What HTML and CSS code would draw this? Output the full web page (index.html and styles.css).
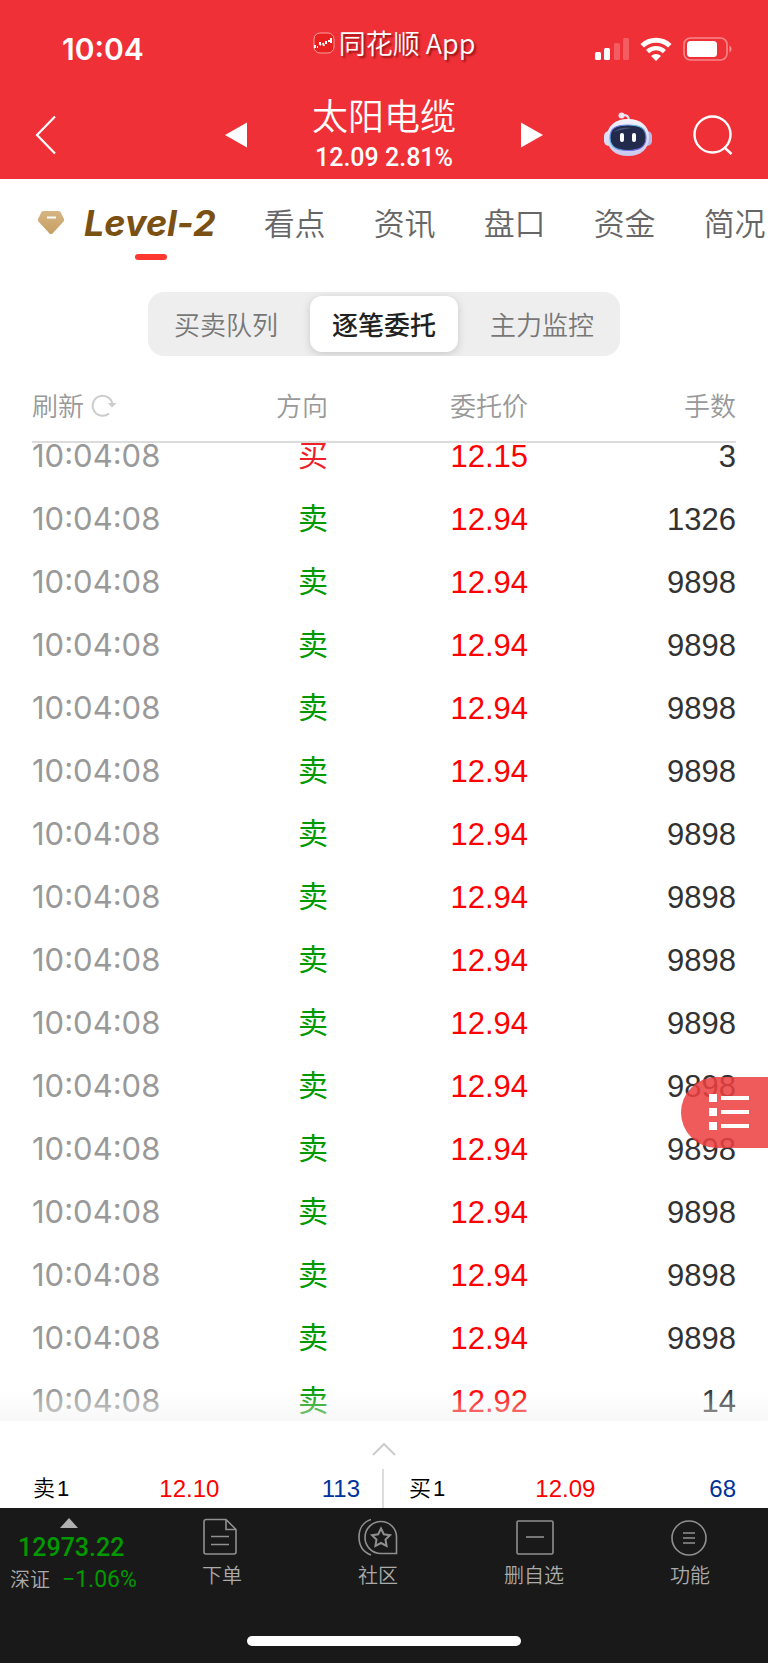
FILE: index.html
```html
<!DOCTYPE html>
<html lang="zh-CN">
<head>
    <meta charset="UTF-8">
    <meta name="viewport" content="width=device-width, initial-scale=1.0">
    <title>太阳电缆 Level-2</title>
    <link rel="stylesheet" href="styles.css">
</head>
<body>
    <header class="header">
        <div class="status-bar">
            <span class="clock">10:04</span>
            <div class="app-name">
                <svg width="22" height="22" viewBox="0 0 22 22">
                    <rect x="1" y="1" width="20" height="20" rx="6" fill="#e8201f" stroke="#f8a0a0"/>
                    <path d="M2 13v3M4 15h1M7 10v2l1 1M10 11l1 3M13 9v3M16 8v2M18 6v5" stroke="#fff" stroke-width="2" fill="none"/>
                </svg>
                <span>同花顺 App</span>
            </div>
            <div class="status-icons">
                <svg width="34" height="22" viewBox="0 0 34 22" fill="#fff">
                    <rect x="0" y="14" width="6" height="8" rx="1.5"/>
                    <rect x="9" y="10" width="6" height="12" rx="1.5"/>
                    <rect x="19" y="5" width="6" height="17" rx="1.5" opacity=".22"/>
                    <rect x="28" y="0" width="6" height="22" rx="1.5" opacity=".22"/>
                </svg>
                <svg width="32" height="24" viewBox="0 0 32 24" fill="none" stroke="#fff" stroke-width="5">
                    <path d="M2.2 8.8a19.8 19.8 0 0 1 27.6 0"/>
                    <path d="M7.6 14.6a12 12 0 0 1 16.8 0" stroke-width="4.4"/>
                    <path d="M16 24l-5-5a7.4 7.4 0 0 1 10 0z" fill="#fff" stroke="none"/>
                </svg>
                <svg width="49" height="24" viewBox="0 0 49 24">
                    <rect x="1" y="1" width="43" height="22" rx="6.5" fill="none" stroke="#fff" stroke-width="1.6" opacity=".42"/>
                    <rect x="4" y="4" width="30" height="16" rx="3.5" fill="#fff"/>
                    <path d="M46.5 8.5a4 4 0 0 1 0 7z" fill="#fff" opacity=".5"/>
                </svg>
            </div>
        </div>
        <div class="title-bar">
            <div class="title-side">
                <button class="icon-btn" aria-label="返回">
                    <svg width="22" height="40" viewBox="0 0 22 40"><path d="M20 1.5L2 20l18 18.5" fill="none" stroke="#fff" stroke-width="2.2"/></svg>
                </button>
                <button class="icon-btn" aria-label="上一只">
                    <svg width="22" height="26" viewBox="0 0 22 26"><path d="M22 .5v25L0 13z" fill="#fff"/></svg>
                </button>
            </div>
            <div class="stock">
                <h1 class="stock-name">太阳电缆</h1>
                <div class="stock-price">12.09 2.81%</div>
            </div>
            <div class="title-side">
                <button class="icon-btn" aria-label="下一只">
                    <svg width="22" height="26" viewBox="0 0 22 26"><path d="M0 .5v25L22 13z" fill="#fff"/></svg>
                </button>
                <div class="title-tools">
                    <button class="icon-btn" aria-label="智能助手">
                        <svg width="48" height="46" viewBox="0 0 48 46">
                            <defs>
                                <linearGradient id="shell" x1="0" y1="0" x2="0" y2="1">
                                    <stop offset="0" stop-color="#f4f4fe"/>
                                    <stop offset="1" stop-color="#c9c8ee"/>
                                </linearGradient>
                                <linearGradient id="rim" x1="0" y1="0" x2="1" y2="1">
                                    <stop offset="0" stop-color="#7a5cf0"/>
                                    <stop offset=".4" stop-color="#59bfe0"/>
                                    <stop offset="1" stop-color="#7a48e8"/>
                                </linearGradient>
                            </defs>
                            <path d="M18 3.5c4-1 7 0 7 6" fill="none" stroke="#e6e0f4" stroke-width="2.2"/>
                            <circle cx="17.5" cy="3.5" r="3" fill="#f6e4ee"/>
                            <rect x="0" y="19" width="10" height="15" rx="5" fill="#dcdcf6"/>
                            <rect x="38" y="19" width="10" height="15" rx="5" fill="#b9b8e6"/>
                            <path d="M24 7c13 0 21 7 21 18 0 12-8 19-21 19S3 37 3 25C3 14 11 7 24 7z" fill="url(#shell)"/>
                            <path d="M24 13c12 0 18 3 18 12.5S36 38.5 24 38.5 6 35 6 25.5 12 13 24 13z" fill="#222b4c" stroke="url(#rim)" stroke-width="1.2"/>
                            <path d="M10 20c3-4 11-5 18-4-8 1-14 2-18 4z" fill="#4a557c"/>
                            <rect x="16" y="21" width="4" height="9" rx="2" fill="#fff"/>
                            <rect x="28" y="21" width="4" height="9" rx="2" fill="#fff"/>
                        </svg>
                    </button>
                    <button class="icon-btn" aria-label="搜索">
                        <svg width="40" height="40" viewBox="0 0 40 40" fill="none" stroke="#fff" stroke-width="2.4">
                            <circle cx="19.5" cy="19.5" r="18"/>
                            <path d="M31 32l7.5 7"/>
                        </svg>
                    </button>
                </div>
            </div>
        </div>
    </header>

    <nav class="tabs">
        <a class="tab tab-level" href="#">
            <svg width="28" height="26" viewBox="0 0 28 26">
                <defs>
                    <linearGradient id="gem" x1="0" y1="0" x2="0" y2="1">
                        <stop offset="0" stop-color="#d6b583"/>
                        <stop offset="1" stop-color="#c79e62"/>
                    </linearGradient>
                </defs>
                <path d="M6 1h16l1.5 1L27 9v2L15 24h-2L1 11V9l3.5-7z" fill="url(#gem)"/>
                <rect x="10" y="6.5" width="9" height="2" fill="#fff"/>
            </svg>
            <span class="level-text">Level-2</span>
        </a>
        <a class="tab" href="#">看点</a>
        <a class="tab" href="#">资讯</a>
        <a class="tab" href="#">盘口</a>
        <a class="tab" href="#">资金</a>
        <a class="tab" href="#">简况</a>
    </nav>

    <div class="segment">
        <button class="segment-btn">买卖队列</button>
        <button class="segment-btn active">逐笔委托</button>
        <button class="segment-btn">主力监控</button>
    </div>

    <main class="list">
        <table class="orders">
            <thead>
                <tr>
                    <th>
                        <button class="refresh">刷新
                            <svg width="26" height="24" viewBox="0 0 26 24">
                                <path d="M18 20.5A10 10 0 1 1 21.5 11" fill="none" stroke="#ccc" stroke-width="2"/>
                                <path d="M17 10h8.5L21 14.5z" fill="#ccc"/>
                            </svg>
                        </button>
                    </th>
                    <th>方向</th>
                    <th>委托价</th>
                    <th>手数</th>
                </tr>
            </thead>
            <tbody>
                <tr><td>10:04:08</td><td class="buy">买</td><td>12.15</td><td>3</td></tr>
                <tr><td>10:04:08</td><td class="sell">卖</td><td>12.94</td><td>1326</td></tr>
                <tr><td>10:04:08</td><td class="sell">卖</td><td>12.94</td><td>9898</td></tr>
                <tr><td>10:04:08</td><td class="sell">卖</td><td>12.94</td><td>9898</td></tr>
                <tr><td>10:04:08</td><td class="sell">卖</td><td>12.94</td><td>9898</td></tr>
                <tr><td>10:04:08</td><td class="sell">卖</td><td>12.94</td><td>9898</td></tr>
                <tr><td>10:04:08</td><td class="sell">卖</td><td>12.94</td><td>9898</td></tr>
                <tr><td>10:04:08</td><td class="sell">卖</td><td>12.94</td><td>9898</td></tr>
                <tr><td>10:04:08</td><td class="sell">卖</td><td>12.94</td><td>9898</td></tr>
                <tr><td>10:04:08</td><td class="sell">卖</td><td>12.94</td><td>9898</td></tr>
                <tr><td>10:04:08</td><td class="sell">卖</td><td>12.94</td><td>9898</td></tr>
                <tr><td>10:04:08</td><td class="sell">卖</td><td>12.94</td><td>9898</td></tr>
                <tr><td>10:04:08</td><td class="sell">卖</td><td>12.94</td><td>9898</td></tr>
                <tr><td>10:04:08</td><td class="sell">卖</td><td>12.94</td><td>9898</td></tr>
                <tr><td>10:04:08</td><td class="sell">卖</td><td>12.94</td><td>9898</td></tr>
                <tr><td>10:04:08</td><td class="sell">卖</td><td>12.92</td><td>14</td></tr>
            </tbody>
        </table>
    </main>

    <button class="float-menu" aria-label="菜单">
        <svg width="40" height="37" viewBox="0 0 40 37" fill="#fff">
            <rect x="0" y="0" width="8" height="8"/>
            <rect x="0" y="14" width="8" height="8"/>
            <rect x="0" y="28" width="8" height="8"/>
            <rect x="12" y="2" width="28" height="4"/>
            <rect x="12" y="16" width="28" height="4"/>
            <rect x="12" y="30" width="28" height="4"/>
        </svg>
    </button>

    <section class="quote-panel">
        <button class="expand" aria-label="展开">
            <svg width="24" height="14" viewBox="0 0 24 14"><path d="M1 13L12 2l11 11" fill="none" stroke="#ccc" stroke-width="2"/></svg>
        </button>
        <div class="quotes">
            <div class="quote">
                <span class="quote-label">卖<span>1</span></span>
                <span class="quote-price">12.10</span>
                <span class="quote-vol">113</span>
            </div>
            <div class="quote">
                <span class="quote-label">买<span>1</span></span>
                <span class="quote-price">12.09</span>
                <span class="quote-vol">68</span>
            </div>
        </div>
    </section>

    <footer class="footer">
        <nav class="toolbar">
            <a class="index" href="#">
                <svg width="18" height="10" viewBox="0 0 18 10"><path d="M9 0l9 10H0z" fill="#b0b0b0"/></svg>
                <span class="index-value">12973.22</span>
                <span class="index-row">深证 <span class="index-change">−1.06%</span></span>
            </a>
            <a class="tool" href="#">
                <svg width="40" height="38" viewBox="0 0 40 38">
                    <path d="M4 1.5h20l10 10V34a2 2 0 0 1-2 2H4a2 2 0 0 1-2-2V3.5a2 2 0 0 1 2-2zM24 1.5v10h10M9 18.5h18M9 26.5h18"/>
                </svg>
                下单
            </a>
            <a class="tool" href="#">
                <svg width="40" height="38" viewBox="0 0 40 38">
                    <path d="M13 1.5C5 4 1 11 1 19s4 15 12 18"/>
                    <path d="M23 3.5A15.5 15.5 0 0 0 23 35.5h15.5V19A15.5 15.5 0 0 0 23 3.5z"/>
                    <path d="M23 10.5l2.8 5.8 6.2.9-4.5 4.4 1.1 6.4-5.6-3-5.6 3 1.1-6.4-4.5-4.4 6.2-.9z" stroke-width="2"/>
                </svg>
                社区
            </a>
            <a class="tool" href="#">
                <svg width="40" height="38" viewBox="0 0 40 38">
                    <rect x="3" y="3" width="36" height="33" rx="1.5"/>
                    <path d="M12 19h18"/>
                </svg>
                删自选
            </a>
            <a class="tool" href="#">
                <svg width="40" height="38" viewBox="0 0 40 38">
                    <circle cx="19" cy="20" r="17"/>
                    <path d="M13 15h12M13 20h12M13 25h12"/>
                </svg>
                功能
            </a>
        </nav>
        <div class="home-indicator"></div>
    </footer>
</body>
</html>
```

FILE: styles.css
```css
* { box-sizing: border-box; }
body { margin: 0; background: #fff; color: #323232; font-family: "Liberation Sans", "Noto Sans CJK SC", sans-serif; font-weight: 350; }
svg { display: block; flex: none; }
a { color: inherit; text-decoration: none; }
button { margin: 0; padding: 0; border: none; background: none; color: inherit; font: inherit; cursor: pointer; }

/* header */
.header { background: #f03037; color: #fff; }
.status-bar { display: grid; grid-template-columns: 1fr auto 1fr; align-items: center; height: 90px; padding: 8px 36px 0 62px; }
.clock { font: 600 30px/36px Inter, sans-serif; }
.app-name { display: flex; align-items: center; gap: 4px; padding: 0 6px 12px 0; font: 350 27px/36px "Noto Sans CJK SC", sans-serif; text-shadow: 2px 2px 2px rgba(90,0,0,0.6); }
.status-icons { display: flex; align-items: center; justify-content: flex-end; gap: 11px; }
.title-bar { display: grid; grid-template-columns: 1fr auto 1fr; align-items: center; gap: 65px; height: 89px; padding: 0 35px; }
.title-side { display: flex; align-items: center; justify-content: space-between; }
.title-tools { display: flex; align-items: center; gap: 41px; }
.stock { text-align: center; }
.stock-name { margin: 0; font: 350 36px/40px "Noto Sans CJK SC", sans-serif; }
.stock-price { padding-top: 6px; font: 500 25px/36px Roboto, sans-serif; }

/* tabs */
.tabs { display: flex; gap: 48px; height: 88px; padding-left: 37px; overflow: hidden; white-space: nowrap; }
.tab { height: 88px; font: 350 31px/86px "Noto Sans CJK SC", sans-serif; color: #666; }
.tab-level { position: relative; display: flex; align-items: center; gap: 19px; color: #7a5013; }
.tab-level::after { content: ''; position: absolute; left: 98px; bottom: 7px; width: 32px; height: 6px; border-radius: 3px; background: #fe3830; }
.level-text { font: italic 700 36px/88px Inter, sans-serif; }

.segment { display: flex; width: 472px; height: 64px; margin: 25px auto 0; padding: 4px; border-radius: 16px; background: #eee; }
.segment-btn { flex: 1; padding-right: 10px; border-radius: 12px; font: 350 26px/54px "Noto Sans CJK SC", sans-serif; color: #777; }
.segment-btn:last-child { padding: 0 0 0 10px; }
.segment-btn.active { flex: none; width: 148px; padding: 0; background: #fff; color: #222; font-weight: 500; box-shadow: 0 2px 8px rgba(0,0,0,0.16); }

/* order list */
.list { position: relative; overflow: hidden; }
.list::after { content: ''; position: absolute; left: 0; right: 0; bottom: 12px; height: 32px; background: linear-gradient(rgba(255,255,255,0), rgba(243,243,243,0.6)); }
.orders { display: block; padding: 0 32px; }
.orders thead { display: block; position: relative; z-index: 1; height: 87px; border-bottom: 2px solid #dcdcdc; background: #fff; }
.orders tbody { display: block; margin-top: -18px; }
.orders tr { display: grid; grid-template-columns: 150fr 146fr 200fr 208fr; }
.orders th { padding: 0; text-align: right; font: 350 26px/98px "Noto Sans CJK SC", sans-serif; color: #999; }
.orders th:first-child { text-align: left; }
.orders td { padding: 0; text-align: right; font-size: 31px; line-height: 63px; height: 63px; }
.orders td:first-child { text-align: left; white-space: nowrap; font: 400 31px/62px Inter, sans-serif; color: #999; }
.orders td:nth-child(2) { font: 400 30px/56px "Noto Sans CJK SC", sans-serif; }
.orders td:nth-child(3) { color: #f00; }
.orders .buy { color: #f02028; }
.orders .sell { color: #090; }
.refresh { display: flex; align-items: center; gap: 7px; }

.float-menu { position: fixed; right: 0; bottom: 515px; width: 87px; height: 71px; padding-left: 28px; border-radius: 36px 0 0 36px; background: rgba(236,64,64,0.86); }

/* best bid and ask */
.quote-panel { position: relative; margin-top: -12px; background: #fff; }
.expand { display: block; width: 100%; padding: 21px 0 13px; }
.expand svg { margin: 0 auto; }
.quotes { display: flex; }
.quote { flex: 1; display: grid; grid-template-columns: 20% 37% 43%; padding: 0 22px 0 33px; font-size: 24px; line-height: 39px; color: #000; }
.quote + .quote { border-left: 2px solid #ddd; padding: 0 32px 0 25px; }
.quote-label { display: flex; gap: 2px; font-size: 22px; }
.quote-price { text-align: right; color: #f00; }
.quote-vol { text-align: right; color: #039; }

/* bottom bar */
.footer { height: 155px; background: #191919; color: #aaa; }
.toolbar { display: flex; height: 128px; }
.index { width: 144px; padding-top: 10px; font-size: 20px; }
.index svg { margin-left: 60px; }
.index-value { display: block; padding: 2px 0 0 18px; font: 500 25px/36px Roboto, sans-serif; color: #090; }
.index-row { display: flex; align-items: center; gap: 12px; padding-left: 10px; line-height: 28px; white-space: nowrap; }
.index-change { font: 400 23px/28px Roboto, sans-serif; color: #090; }
.tool { flex: 1; display: flex; flex-direction: column; align-items: center; padding-top: 10px; font: 350 20px/38px "Noto Sans CJK SC", sans-serif; }
.tool svg { fill: none; stroke: #909090; stroke-width: 1.6; }
.home-indicator { width: 274px; height: 10px; margin: 0 auto; border-radius: 5px; background: #fff; }
```
